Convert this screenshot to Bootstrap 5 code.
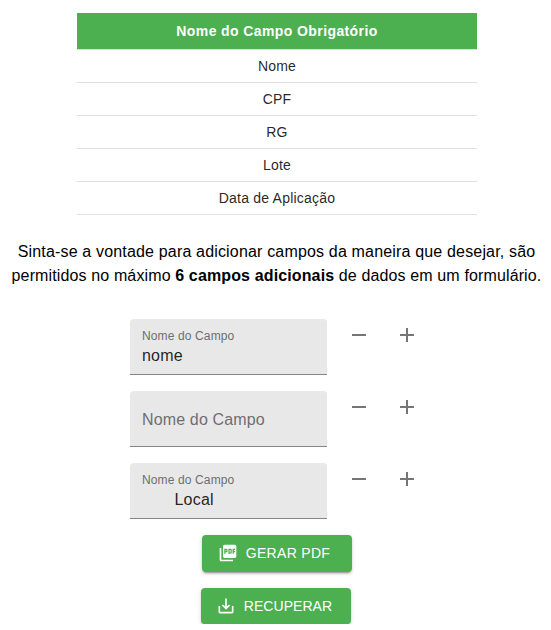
<!DOCTYPE html>
<html lang="pt-BR">
<head>
<meta charset="utf-8">
<meta name="viewport" content="width=device-width, initial-scale=1">
<title>Campos do formulário</title>
<link href="https://cdn.jsdelivr.net/npm/bootstrap@5.3.0/dist/css/bootstrap.min.css" rel="stylesheet">
<style>
  body { font-family: "Liberation Sans", Arial, sans-serif; color: #000; background: #fff; overflow: hidden; }
  .required-table { width: 400px; margin: 13px 0 0 77px; font-size: 14px; line-height: 20px; letter-spacing: .22px; border-collapse: separate; border-spacing: 0; }
  .required-table th, .required-table td { padding: 6px 16px; border: 0; border-bottom: 1px solid #e0e0e0; color: rgba(0,0,0,.87); }
  .required-table th { height: 37px; background: #4caf50; background-clip: padding-box; color: #fff; letter-spacing: .4px; }
  .required-table td { height: 33px; }
  .intro { margin-top: 25px; padding-left: 2px; font-size: 16px; line-height: 24px; letter-spacing: .13px; }
  .intro-lead { letter-spacing: .17px; }
  .field-list { margin: 31px 0 0 130px; gap: 16px; }
  .filled-field { width: 197px; height: 56px; margin-right: 8px; padding: 0 12px; background: #e8e8e8; border-bottom: 1px solid #858585; border-radius: 4px 4px 0 0; }
  .filled-field label { display: block; padding-top: 10px; font-size: 12px; line-height: 14px; letter-spacing: .13px; color: #6f6f6f; }
  .filled-field input { display: block; width: 100%; height: 19px; margin-top: 3px; padding: 0; border: 0; outline: 0; background: transparent; font-size: 16px; line-height: 19px; letter-spacing: .2px; color: rgba(0,0,0,.87); }
  .filled-field .blank { height: 55px; margin: 0; padding-top: 2px; letter-spacing: .15px; }
  .filled-field .blank::placeholder { color: #6f6f6f; opacity: 1; }
  .filled-field .indented { padding-left: 32.5px; }
  .icon-action { width: 48px; height: 48px; margin-top: -8px; color: #757575; }
  .icon-action svg { width: 24px; height: 24px; fill: currentColor; }
  .raised { width: 150px; height: 37px; padding: 0; background: #4caf50; color: #fff; border: 0; border-radius: 4px; font-size: 14px; line-height: 24px; letter-spacing: .3px; box-shadow: 0 3px 1px -2px rgba(0,0,0,.2), 0 2px 2px rgba(0,0,0,.14), 0 1px 5px rgba(0,0,0,.12); }
  .raised svg { width: 20px; height: 20px; margin: 0 8px 0 -4px; fill: currentColor; }
  .raised-pdf { margin: 16px 0 0 202px; padding: 0 2px 1px 0; }
  .raised-recover { margin: 16px 0 0 201px; height: 36px; letter-spacing: .05px; }
</style>
<script src="https://cdn.jsdelivr.net/npm/bootstrap@5.3.0/dist/js/bootstrap.bundle.min.js"></script>
</head>
<body>
<table class="required-table text-center align-middle">
  <thead><tr><th>Nome do Campo Obrigatório</th></tr></thead>
  <tbody>
    <tr><td>Nome</td></tr>
    <tr><td>CPF</td></tr>
    <tr><td>RG</td></tr>
    <tr><td>Lote</td></tr>
    <tr><td>Data de Aplicação</td></tr>
  </tbody>
</table>
<p class="intro text-center text-nowrap mb-0"><span class="intro-lead">Sinta-se a vontade para adicionar campos da maneira que desejar, são</span><br>permitidos no máximo <strong>6 campos adicionais</strong> de dados em um formulário.</p>
<form>
  <div class="field-list d-flex flex-column">
    <div class="d-flex align-items-start">
      <div class="filled-field"><label for="f1">Nome do Campo</label><input id="f1" type="text" value="nome"></div>
      <button type="button" class="icon-action btn border-0 p-0 d-flex align-items-center justify-content-center" aria-label="Remover"><svg viewBox="0 0 24 24"><path d="M19 13H5v-2h14v2z"/></svg></button>
      <button type="button" class="icon-action btn border-0 p-0 d-flex align-items-center justify-content-center" aria-label="Adicionar"><svg viewBox="0 0 24 24"><path d="M19 13h-6v6h-2v-6H5v-2h6V5h2v6h6v2z"/></svg></button>
    </div>
    <div class="d-flex align-items-start">
      <div class="filled-field"><input class="blank" type="text" placeholder="Nome do Campo" aria-label="Nome do Campo"></div>
      <button type="button" class="icon-action btn border-0 p-0 d-flex align-items-center justify-content-center" aria-label="Remover"><svg viewBox="0 0 24 24"><path d="M19 13H5v-2h14v2z"/></svg></button>
      <button type="button" class="icon-action btn border-0 p-0 d-flex align-items-center justify-content-center" aria-label="Adicionar"><svg viewBox="0 0 24 24"><path d="M19 13h-6v6h-2v-6H5v-2h6V5h2v6h6v2z"/></svg></button>
    </div>
    <div class="d-flex align-items-start">
      <div class="filled-field"><label for="f3">Nome do Campo</label><input id="f3" class="indented" type="text" value="Local"></div>
      <button type="button" class="icon-action btn border-0 p-0 d-flex align-items-center justify-content-center" aria-label="Remover"><svg viewBox="0 0 24 24"><path d="M19 13H5v-2h14v2z"/></svg></button>
      <button type="button" class="icon-action btn border-0 p-0 d-flex align-items-center justify-content-center" aria-label="Adicionar"><svg viewBox="0 0 24 24"><path d="M19 13h-6v6h-2v-6H5v-2h6V5h2v6h6v2z"/></svg></button>
    </div>
  </div>
  <button type="button" class="raised raised-pdf btn d-flex align-items-center justify-content-center"><svg viewBox="0 0 24 24"><path d="M20 2H8c-1.1 0-2 .9-2 2v12c0 1.1.9 2 2 2h12c1.1 0 2-.9 2-2V4c0-1.1-.9-2-2-2zm-8.500 7.500c0 .83-.67 1.500-1.500 1.500H9v2H7.500V7H10c.83 0 1.500.67 1.500 1.500v1zm5 2c0 .83-.67 1.500-1.500 1.500h-2.500V7H15c.83 0 1.500.67 1.500 1.500v3zm4-3H19v1h1.500V11H19v2h-1.500V7h3v1.500zM9 9.500h1v-1H9v1zM4 6H2v14c0 1.100.9 2 2 2h14v-2H4V6zm10 5.500h1v-3h-1v3z"/></svg>GERAR PDF</button>
  <button type="button" class="raised raised-recover btn d-flex align-items-center justify-content-center"><svg viewBox="0 0 24 24"><path d="M19 12v7H5v-7H3v7c0 1.100.9 2 2 2h14c1.100 0 2-.9 2-2v-7h-2zm-6 .67l2.590-2.580L17 11.500l-5 5-5-5 1.410-1.410L11 12.670V3h2z"/></svg>RECUPERAR</button>
</form>
</body>
</html>
